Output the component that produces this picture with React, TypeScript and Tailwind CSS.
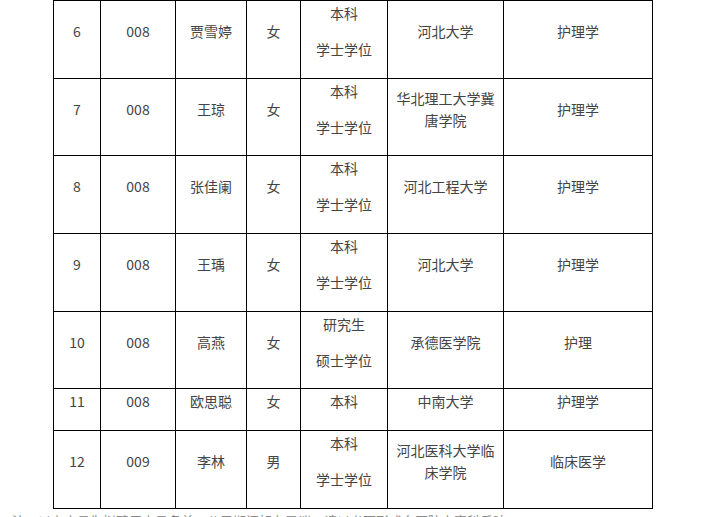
import React from "react";

type Row = {
  no: string;
  code: string;
  name: string;
  sex: string;
  edu: string[];
  school: string;
  major: string;
  h: string;
};

const rows: Row[] = [
  { no: "6", code: "008", name: "贾雪婷", sex: "女", edu: ["本科", "学士学位"], school: "河北大学", major: "护理学", h: "h-[78px]" },
  { no: "7", code: "008", name: "王琼", sex: "女", edu: ["本科", "学士学位"], school: "华北理工大学冀唐学院", major: "护理学", h: "h-[77px]" },
  { no: "8", code: "008", name: "张佳阑", sex: "女", edu: ["本科", "学士学位"], school: "河北工程大学", major: "护理学", h: "h-[78px]" },
  { no: "9", code: "008", name: "王瑀", sex: "女", edu: ["本科", "学士学位"], school: "河北大学", major: "护理学", h: "h-[78px]" },
  { no: "10", code: "008", name: "高燕", sex: "女", edu: ["研究生", "硕士学位"], school: "承德医学院", major: "护理", h: "h-[77px]" },
  { no: "11", code: "008", name: "欧思聪", sex: "女", edu: ["本科"], school: "中南大学", major: "护理学", h: "h-[42px]" },
  { no: "12", code: "009", name: "李林", sex: "男", edu: ["本科", "学士学位"], school: "河北医科大学临床学院", major: "临床医学", h: "h-[78px]" },
];

function Cell({ h, children, extra = "" }: { h: string; children: React.ReactNode; extra?: string }) {
  return (
    <div
      className={`${h} border-r border-b border-black flex flex-col items-center justify-center text-center pb-[17px] ${extra}`}
    >
      {children}
    </div>
  );
}

export default function App() {
  return (
    <div
      className="w-[704px] h-[517px] overflow-hidden bg-white text-[14px] text-[#444]"
      style={{ fontFamily: '"Noto Sans CJK SC", "Noto Sans", sans-serif' }}
    >
      <div className="ml-[53px] w-[600px] border-l border-t border-black grid grid-cols-[47px_75px_71px_54px_87px_116px_149px]">
        {rows.map((r) => (
          <React.Fragment key={r.no}>
            <Cell h={r.h}><span className="leading-[20px]">{r.no}</span></Cell>
            <Cell h={r.h}><span className="leading-[20px]">{r.code}</span></Cell>
            <Cell h={r.h}><span className="leading-[20px]">{r.name}</span></Cell>
            <Cell h={r.h}><span className="leading-[20px]">{r.sex}</span></Cell>
            <Cell h={r.h}>
              {r.edu.length === 2 ? (
                <div className="flex flex-col items-center gap-[14px]">
                  <span className="leading-[22px]">{r.edu[0]}</span>
                  <span className="leading-[22px]">{r.edu[1]}</span>
                </div>
              ) : (
                <span className="leading-[20px]">{r.edu[0]}</span>
              )}
            </Cell>
            <Cell h={r.h} extra="px-[7px]"><span className="leading-[22px]">{r.school}</span></Cell>
            <Cell h={r.h}><span className="leading-[20px]">{r.major}</span></Cell>
          </React.Fragment>
        ))}
      </div>
      <div className="mt-[5px] pl-[12px] w-[704px] overflow-hidden whitespace-nowrap leading-[14px] text-[13px] text-[#888]">
        注：以上人员为拟聘用人员名单，公示期间如有异议，请以书面形式向医院人事科反映。
      </div>
    </div>
  );
}
